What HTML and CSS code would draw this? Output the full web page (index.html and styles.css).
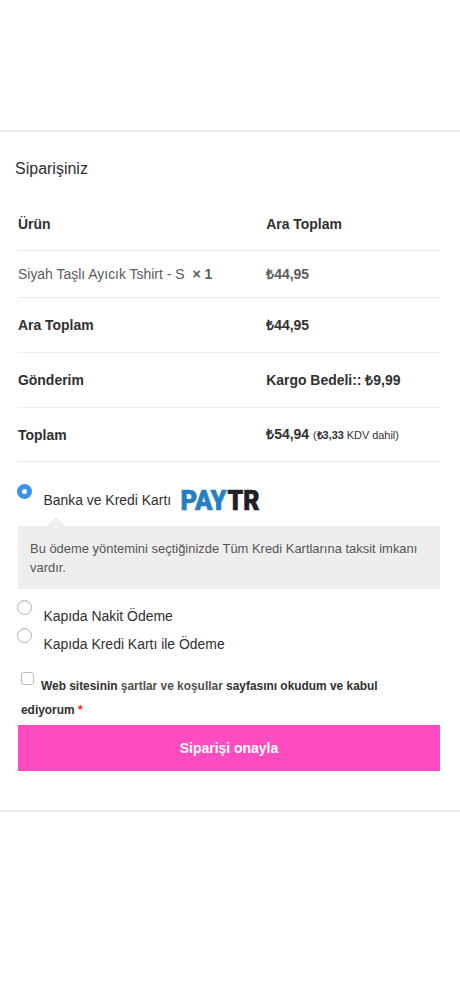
FILE: index.html
```html
<!DOCTYPE html>
<html lang="tr">
<head>
<meta charset="utf-8">
<meta name="viewport" content="width=device-width, initial-scale=1">
<title>Siparişiniz</title>
<link rel="stylesheet" href="styles.css">
</head>
<body>
<main class="order">
  <h1 class="order-title">Siparişiniz</h1>
  <div class="table">
    <div class="row row-head"><b>Ürün</b><b>Ara Toplam</b></div>
    <div class="row row-item"><span><span class="name">Siyah Taşlı Ayıcık Tshirt - S</span><b class="qty">× 1</b></span><b class="price">₺44,95</b></div>
    <div class="row"><b>Ara Toplam</b><b class="price">₺44,95</b></div>
    <div class="row"><b>Gönderim</b><b class="price">Kargo Bedeli:: ₺9,99</b></div>
    <div class="row row-total"><b>Toplam</b><span class="price"><b>₺54,94</b> <small class="tax">(<b>₺3,33</b> KDV dahil)</small></span></div>
  </div>
  <div class="methods">
    <label class="method method-card"><span class="radio radio-on"></span><span>Banka ve Kredi Kartı</span>
      <svg class="logo" width="80" height="30" viewBox="0 0 80 30" role="img" aria-label="PAYTR"><text class="pay" x="-0.5" y="23" textLength="46" lengthAdjust="spacingAndGlyphs">PAY</text><text class="tr" x="46.5" y="23" textLength="32" lengthAdjust="spacingAndGlyphs">TR</text></svg>
    </label>
    <div class="info">Bu ödeme yöntemini seçtiğinizde Tüm Kredi Kartlarına taksit imkanı vardır.</div>
    <label class="method"><span class="radio"></span><span>Kapıda Nakit Ödeme</span></label>
    <label class="method"><span class="radio"></span><span>Kapıda Kredi Kartı ile Ödeme</span></label>
  </div>
  <div class="terms"><span class="checkbox"></span><b>Web sitesinin <span class="link">şartlar ve koşullar</span> sayfasını okudum ve kabul<br><span class="accept">ediyorum <span class="required">*</span></span></b></div>
  <button class="submit">Siparişi onayla</button>
</main>
</body>
</html>
```
FILE: styles.css
```css
* { box-sizing: border-box; }
body {
  margin: 0;
  background: #fff;
  color: #303030;
  font-family: "Liberation Sans", Arial, sans-serif;
  font-size: 13.95px;
}
.order {
  height: 682px;
  margin-top: 130px;
  padding: 0 20px 0 18px;
  border-top: 2px solid #ececec;
  border-bottom: 2px solid #ececec;
}
.order-title {
  margin: 0 0 0 -3px;
  padding-top: 27px;
  height: 66px;
  font-size: 16px;
  line-height: 20px;
  font-weight: 400;
}
.row {
  display: grid;
  grid-template-columns: 248.2px 1fr;
  align-items: center;
  height: 54.8px;
  border-bottom: 1px solid #ebebeb;
}
.row-head { height: 53px; }
.row-item { height: 47px; color: #5c5c5c; }
.row-total { padding-top: 1px; }
.qty { margin-left: 8px; }
.price { line-height: 16px; }
.tax { font-size: 10.9px; }
.method {
  display: flex;
  height: 28px;
  line-height: 20px;
}
.method > span:nth-child(2) { padding-top: 7px; }
.method-card { height: 64px; padding-top: 21px; }
.radio {
  flex: none;
  width: 15px;
  height: 15px;
  margin: 1px 11.4px 0 -1px;
  border: 1px solid #b4b4b4;
  border-radius: 50%;
  box-shadow: inset 0 1px 1px #e4e4e4;
}
.radio-on { border: 5px solid #3b93f1; box-shadow: none; }
.logo { margin: 4px 0 0 10px; overflow: visible; }
.logo text {
  font: 900 28.5px Roboto, sans-serif;
  stroke-width: 0.7px;
}
.pay { fill: #2580c3; stroke: #2580c3; }
.tr { fill: #202024; stroke: #202024; }
.info {
  position: relative;
  height: 63px;
  margin-bottom: 10px;
  padding: 13px 12px;
  background: #eee;
  color: #555;
  font-size: 12.95px;
  line-height: 19px;
}
.info::before {
  content: "";
  position: absolute;
  left: 28px;
  top: -9px;
  border: solid transparent;
  border-width: 0 10px 9px;
  border-bottom-color: #eee;
}
.terms {
  display: flex;
  height: 53px;
  margin-top: 17px;
  padding-left: 3px;
  font-size: 11.92px;
  line-height: 24px;
}
.terms b { text-indent: 20px; margin-left: -13px; padding-top: 2px; }
.checkbox {
  flex: none;
  width: 13px;
  height: 13px;
  border: 1px solid #b9b9b9;
  border-radius: 3px;
}
.link { color: #505050; }
.required { color: #ff2020; }
.submit {
  display: block;
  width: 100%;
  height: 46px;
  padding: 0;
  border: 0;
  background: #ff4dc1;
  color: #fff;
  font: bold 13.95px "Liberation Sans", Arial, sans-serif;
}
```
